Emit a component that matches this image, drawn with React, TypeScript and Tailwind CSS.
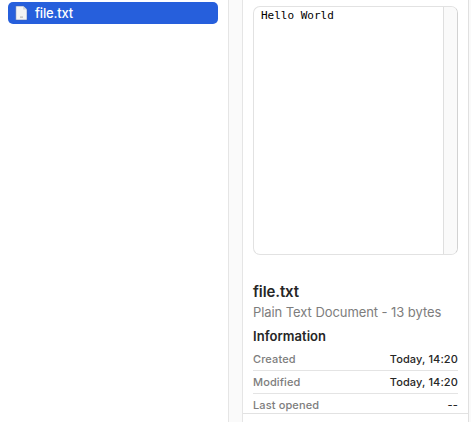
function FileIcon() {
  return (
    <svg width="13" height="16" viewBox="0 0 13 16" className="shrink-0">
      <path d="M.8 1h7.4L12 4.6V15H.8z" fill="#f4f4f3" stroke="#3c5fae" strokeWidth="0.5" />
      <path d="M8.2 1 12 4.6H8.2z" fill="#cfd3da" />
      <path d="M5 12.1h3" stroke="#a3a3a3" strokeWidth="0.9" />
    </svg>
  );
}

function InfoRow({ label, value }: { label: string; value: string }) {
  return (
    <div className="flex h-[23px] shrink-0 items-center justify-between border-b border-[#e4e4e4] text-[11px] leading-[22px] font-medium last:h-[22px] last:border-b-0">
      <span className="tracking-[0.12px] text-[#7d7d7d]">{label}</span>
      <span className="tracking-[0.12px] text-[#262626]">{value}</span>
    </div>
  );
}

export default function App() {
  return (
    <div className="flex h-[422px] w-[471px] overflow-hidden bg-white font-['Inter','Liberation_Sans',sans-serif]">
      <aside className="w-[228px] shrink-0 pt-[2px] pl-2">
        <div className="flex h-[22px] w-[210px] items-center gap-[7px] rounded-[5px] bg-[#265fdc] pl-[7px] text-[13px] font-medium text-white">
          <FileIcon />
          <span className="leading-[22px] tracking-[-0.17px]">file.txt</span>
        </div>
      </aside>
      <div className="w-[15px] shrink-0 border-x border-[#e5e5e5] bg-[#fafafa]" />
      <main className="flex w-[225px] shrink-0 flex-col">
        <section className="flex h-[413px] shrink-0 flex-col overflow-hidden px-[10px] pt-[6px]">
          <div className="flex h-[249px] shrink-0 overflow-hidden rounded-[7px] border border-[#e2e2e2] border-r-[#d2d2d2]">
            <pre className="flex-1 pt-[1px] pl-[7px] font-['DejaVu_Sans_Mono',monospace] text-[11px] leading-[15px] text-black">Hello World</pre>
            <div className="w-[14px] border-l border-[#dfdfdf] bg-[#fafafa]" />
          </div>
          <h1 className="mt-[27px] text-[15px] leading-5 font-semibold tracking-[-0.1px] text-[#262626]">file.txt</h1>
          <p className="mt-[1px] text-[13px] leading-[18px] tracking-[-0.07px] whitespace-nowrap text-[#7d7d7d]">Plain Text Document - 13 bytes</p>
          <h2 className="mt-[6px] text-[13px] leading-[18px] font-semibold tracking-[0.05px] text-[#262626]">Information</h2>
          <div className="mt-[3px] flex flex-col">
            <InfoRow label="Created" value="Today, 14:20" />
            <InfoRow label="Modified" value="Today, 14:20" />
            <InfoRow label="Last opened" value="--" />
          </div>
        </section>
        <div className="flex-1 border-t border-[#e2e2e2]" />
      </main>
      <div className="flex-1 border-l border-[#e0e0e0] bg-[#fafafa]" />
    </div>
  );
}
